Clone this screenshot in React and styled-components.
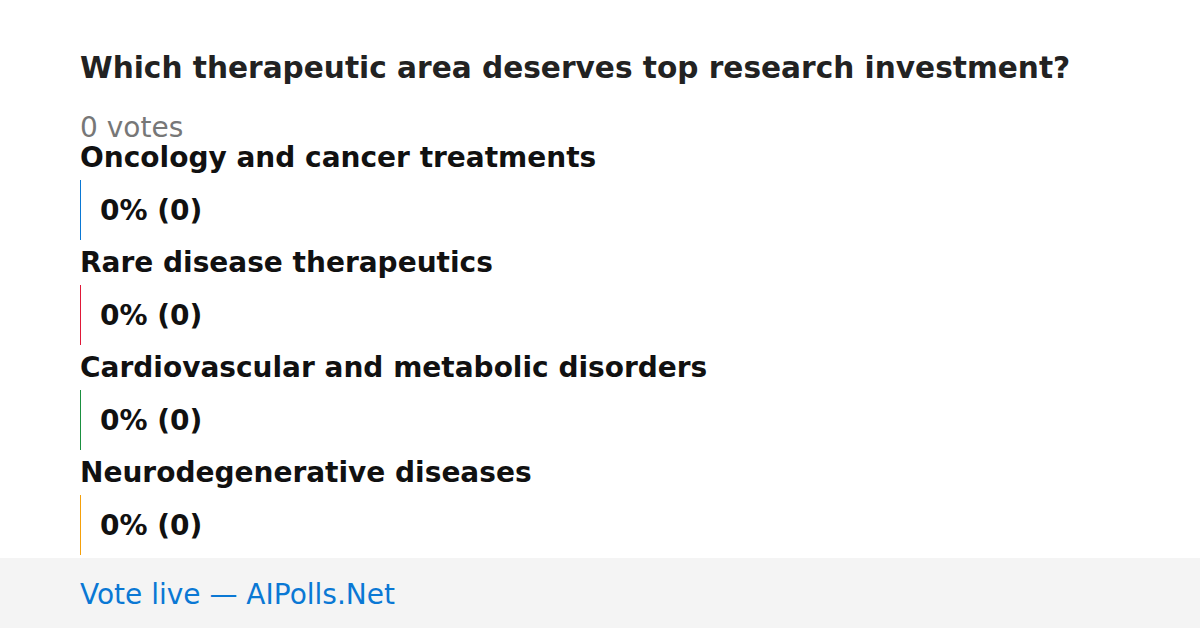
import React from 'react';
import styled, { createGlobalStyle } from 'styled-components';

const GlobalStyle = createGlobalStyle`
  html, body {
    margin: 0;
    padding: 0;
    background: #fff;
    font-family: "DejaVu Sans", "Liberation Sans", sans-serif;
  }
`;

const options = [
  { label: 'Oncology and cancer treatments', color: '#0a78d4', votes: 0 },
  { label: 'Rare disease therapeutics', color: '#e01838', votes: 0 },
  { label: 'Cardiovascular and metabolic disorders', color: '#1a9040', votes: 0 },
  { label: 'Neurodegenerative diseases', color: '#f5a00a', votes: 0 },
];

const Poll = () => {
  const total = options.reduce((s, o) => s + o.votes, 0);

  return (
    <Page>
      <GlobalStyle />
      <Main>
        <Title>Which therapeutic area deserves top research investment?</Title>
        <Votes>{total} votes</Votes>
        <OptionList>
          {options.map((o) => {
            const pct = total ? Math.round((o.votes / total) * 100) : 0;
            return (
              <Option key={o.label}>
                <Label>{o.label}</Label>
                <Bar color={o.color}>
                  {pct}% ({o.votes})
                </Bar>
              </Option>
            );
          })}
        </OptionList>
      </Main>
      <Footer>Vote live — AIPolls.Net</Footer>
    </Page>
  );
};

const Page = styled.div`
  width: 1200px;
  height: 628px;
  display: flex;
  flex-direction: column;
  overflow: hidden;
`;

const Main = styled.div`
  flex: 1;
  padding: 50px 80px 0;
`;

const Title = styled.h1`
  margin: 0 0 27px;
  font-size: 29.6px;
  font-weight: bold;
  color: #222;
  line-height: 36px;
`;

const Votes = styled.div`
  font-size: 28px;
  color: #777;
  line-height: 30px;
`;

const OptionList = styled.div`
  display: flex;
  flex-direction: column;
  gap: 8px;
`;

const Option = styled.div`
  display: flex;
  flex-direction: column;
  gap: 7px;
`;

const Label = styled.div`
  font-size: 28px;
  font-weight: bold;
  color: #111;
  line-height: 30px;
`;

const Bar = styled.div`
  height: 60px;
  display: flex;
  align-items: center;
  padding-left: 19px;
  border-left: 1px solid ${(p) => p.color};
  font-size: 28px;
  font-weight: bold;
  color: #111;
`;

const Footer = styled.div`
  height: 70px;
  flex-shrink: 0;
  box-sizing: border-box;
  background: #f4f4f4;
  display: flex;
  align-items: center;
  padding: 2px 80px 0;
  font-size: 28px;
  color: #0a78d4;
`;

export default Poll;
